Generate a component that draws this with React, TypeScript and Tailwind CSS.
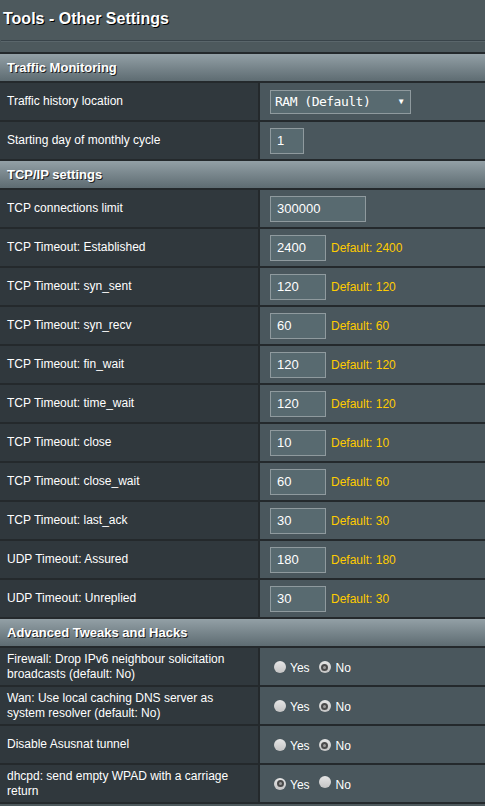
import React from 'react';

type Row =
  | { kind: 'select'; label: string; value: string }
  | { kind: 'input'; label: string; value: string; wide?: boolean; small?: boolean; def?: string }
  | { kind: 'radio'; label: string; yes: boolean };

const sections: { title: string; rows: Row[] }[] = [
  {
    title: 'Traffic Monitoring',
    rows: [
      { kind: 'select', label: 'Traffic history location', value: 'RAM (Default)' },
      { kind: 'input', label: 'Starting day of monthly cycle', value: '1', small: true },
    ],
  },
  {
    title: 'TCP/IP settings',
    rows: [
      { kind: 'input', label: 'TCP connections limit', value: '300000', wide: true },
      { kind: 'input', label: 'TCP Timeout: Established', value: '2400', def: '2400' },
      { kind: 'input', label: 'TCP Timeout: syn_sent', value: '120', def: '120' },
      { kind: 'input', label: 'TCP Timeout: syn_recv', value: '60', def: '60' },
      { kind: 'input', label: 'TCP Timeout: fin_wait', value: '120', def: '120' },
      { kind: 'input', label: 'TCP Timeout: time_wait', value: '120', def: '120' },
      { kind: 'input', label: 'TCP Timeout: close', value: '10', def: '10' },
      { kind: 'input', label: 'TCP Timeout: close_wait', value: '60', def: '60' },
      { kind: 'input', label: 'TCP Timeout: last_ack', value: '30', def: '30' },
      { kind: 'input', label: 'UDP Timeout: Assured', value: '180', def: '180' },
      { kind: 'input', label: 'UDP Timeout: Unreplied', value: '30', def: '30' },
    ],
  },
  {
    title: 'Advanced Tweaks and Hacks',
    rows: [
      { kind: 'radio', label: 'Firewall: Drop IPv6 neighbour solicitation broadcasts (default: No)', yes: false },
      { kind: 'radio', label: 'Wan: Use local caching DNS server as system resolver (default: No)', yes: false },
      { kind: 'radio', label: 'Disable Asusnat tunnel', yes: false },
      { kind: 'radio', label: 'dhcpd: send empty WPAD with a carriage return', yes: true },
    ],
  },
];

const Radio = ({ checked }: { checked: boolean }) => (
  <span className="relative inline-flex w-[12px] h-[12px] rounded-full bg-gradient-to-b from-[#e6e6e6] to-[#c4c4c4] items-center justify-center">
    {checked && (
      <span className="w-[7px] h-[7px] rounded-full bg-[#9a9a9a] border-2 border-[#4a4a4a]" />
    )}
  </span>
);

const Control = ({ row }: { row: Row }) => {
  if (row.kind === 'select') {
    return (
      <div className="w-[141px] h-[24px] border border-[#8f9a9e] bg-[#586a70] flex items-center justify-between pl-[4px] pr-[7px] text-white text-[13px] font-['DejaVu_Sans_Mono',monospace] tracking-[-0.5px]">
        <span>{row.value}</span>
        <span className="text-[8px]">▼</span>
      </div>
    );
  }
  if (row.kind === 'input') {
    const w = row.wide ? 'w-[96px]' : row.small ? 'w-[34px]' : 'w-[56px]';
    return (
      <div className="flex items-center gap-[5px]">
        <div className={`${w} h-[26px] border border-[#8f9a9e] bg-[#586a70] flex items-center pl-[6px] text-white text-[13px]`}>
          {row.value}
        </div>
        {row.def && <span className="text-[#ffcc00] text-[12px]">Default: {row.def}</span>}
      </div>
    );
  }
  return (
    <div className="flex items-center text-white text-[12px] pl-[4px]">
      <Radio checked={row.yes} />
      <span className="ml-[4px] mt-[3px]">Yes</span>
      <span className="ml-[9px]"><Radio checked={!row.yes} /></span>
      <span className="ml-[5px] mt-[3px]">No</span>
    </div>
  );
};

export default function App() {
  return (
    <div className="w-[485px] h-[806px] overflow-hidden bg-[#4d595d] font-['Liberation_Sans',Arial,sans-serif]">
      <div className="h-[52px] pt-[9px] pl-[1px]">
        <h1 className="pl-[2px] text-white text-[16px] font-bold leading-[20px] [text-shadow:1px_1px_0_#000]">
          Tools - Other Settings
        </h1>
        <div className="mt-[11px] border-t border-[#39444a] border-b border-b-[#5a666b]" />
      </div>
      <div className="border-t-2 border-[#24292c]">
        {sections.map((s) => (
          <div key={s.title}>
            <div className="h-[29px] bg-gradient-to-b from-[#93a0a6] to-[#5e6c72] border-b-2 border-[#24292c] flex items-center pl-[7px] text-white text-[13px] font-bold [text-shadow:1px_1px_0_#222]">
              {s.title}
            </div>
            {s.rows.map((r) => (
              <div key={r.label} className="flex h-[39px] border-b-2 border-[#24292c]">
                <div className="w-[258px] bg-[#30383d] flex items-center pl-[7px] pr-[10px] text-white text-[12px] leading-[15px]">
                  {r.label}
                </div>
                <div className="w-[2px] bg-[#24292c]" />
                <div className="flex-1 bg-[#4a575d] flex items-center pl-[10px]">
                  <Control row={r} />
                </div>
              </div>
            ))}
          </div>
        ))}
      </div>
    </div>
  );
}
